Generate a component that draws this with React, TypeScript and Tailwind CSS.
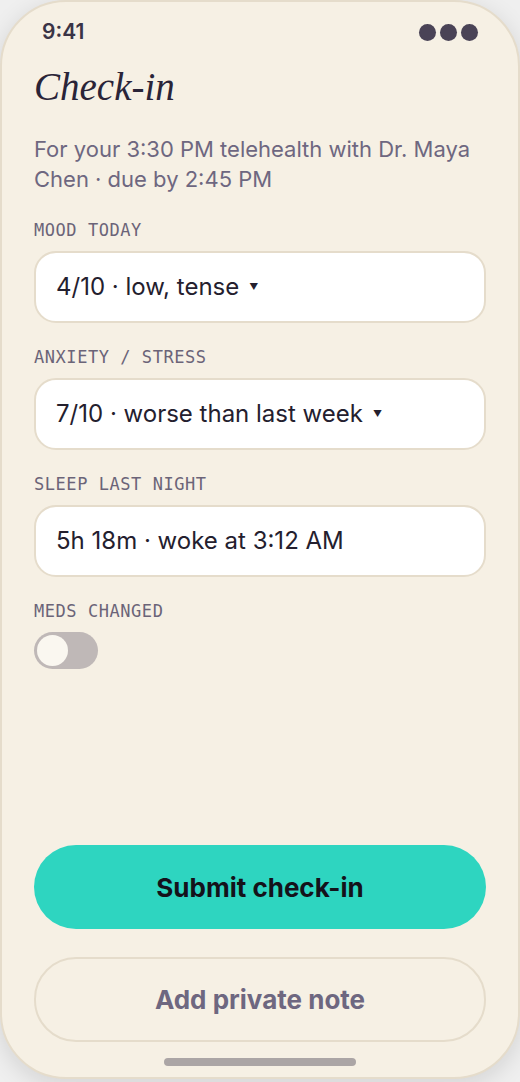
import { useState } from "react";

const fields = [
  { label: "MOOD TODAY", value: "4/10 · low, tense", caret: true },
  { label: "ANXIETY / STRESS", value: "7/10 · worse than last week", caret: true },
  { label: "SLEEP LAST NIGHT", value: "5h 18m · woke at 3:12 AM", caret: false },
];

export default function App() {
  const [medsChanged, setMedsChanged] = useState(false);

  return (
    <div className="w-[520px] h-[1082px] bg-[#efefef] font-['Inter','Noto_Sans',sans-serif]">
      {/* phone */}
      <div className="w-[520px] h-[1079px] rounded-[66px] border-2 border-[#e5dccb] bg-[#f6f0e4] shadow-[0_6px_24px_rgba(0,0,0,0.12)] flex flex-col overflow-hidden">
        {/* status bar */}
        <div className="mt-[18px] h-6 px-10 flex items-center justify-between">
          <span className="text-[21px] font-semibold text-[#3a3446] leading-6">9:41</span>
          <div className="flex gap-1">
            <span className="w-[17px] h-[17px] rounded-full bg-[#4a4356]" />
            <span className="w-[17px] h-[17px] rounded-full bg-[#4a4356]" />
            <span className="w-[17px] h-[17px] rounded-full bg-[#4a4356]" />
          </div>
        </div>

        <div className="px-8 flex flex-col flex-1">
          <h1 className="mt-[19px] text-[39px] leading-[48px] italic text-[#2a2438] font-['Liberation_Serif','DejaVu_Serif',serif]">
            Check-in
          </h1>
          <p className="mt-[23px] text-[22px] leading-[30px] text-[#6e6780]">
            For your 3:30 PM telehealth with Dr. Maya Chen · due by 2:45 PM
          </p>

          <div className="mt-[26px] flex flex-col gap-6">
            {fields.map((f) => (
              <div key={f.label}>
                <div className="mb-[11px] text-[17px] leading-5 tracking-[0.55px] text-[#6b6478] font-['DejaVu_Sans_Mono','Liberation_Mono',monospace]">
                  {f.label}
                </div>
                <div className="h-[72px] rounded-[22px] border-2 border-[#e5dccb] bg-white px-5 flex items-center text-[24px] text-[#24202e]">
                  <span>{f.value}</span>
                  {f.caret && <span className="ml-[10px] text-[9px] text-[#24202e]">▼</span>}
                </div>
              </div>
            ))}

            <div>
              <div className="mb-[11px] text-[17px] leading-5 tracking-[0.55px] text-[#6b6478] font-['DejaVu_Sans_Mono','Liberation_Mono',monospace]">
                MEDS CHANGED
              </div>
              <button
                onClick={() => setMedsChanged(!medsChanged)}
                className={
                  "w-16 h-[37px] rounded-full p-[3px] flex " +
                  (medsChanged ? "bg-[#2ed5c0] justify-end" : "bg-[#bfb8b7] justify-start")
                }
              >
                <span className="w-[31px] h-[31px] rounded-full bg-[#faf7f0]" />
              </button>
            </div>
          </div>

          {/* actions */}
          <div className="mt-auto flex flex-col">
            <button className="h-[84px] rounded-[42px] bg-[#2ed5c0] text-[26px] font-bold text-[#14121a]">
              Submit check-in
            </button>
            <button className="mt-[28px] h-[85px] rounded-[42px] border-2 border-[#e5dccb] text-[26px] font-bold text-[#6e6780]">
              Add private note
            </button>
          </div>
          <div className="mt-[16px] mb-[11px] mx-auto w-[192px] h-2 rounded-full bg-[#aba5a5]" />
        </div>
      </div>
    </div>
  );
}
